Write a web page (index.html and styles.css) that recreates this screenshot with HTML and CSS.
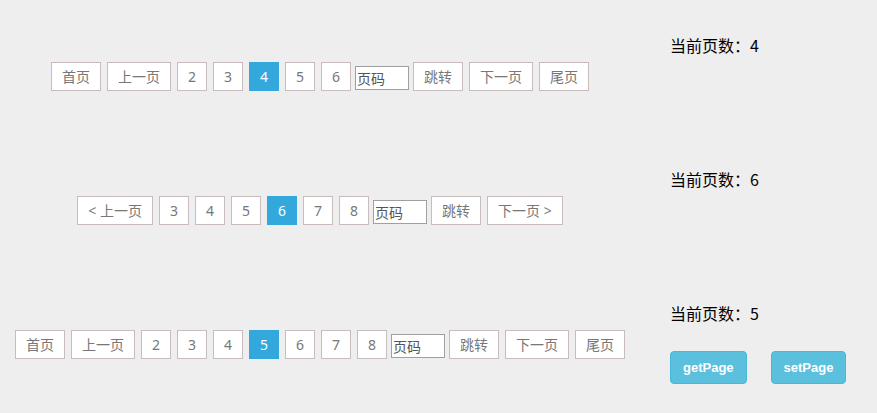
FILE: index.html
```html
<!DOCTYPE html>
<html lang="zh">
<head>
<meta charset="utf-8">
<title>分页</title>
<link rel="stylesheet" href="styles.css">
</head>
<body>
<div class="page">
  <section class="row">
    <div class="left">
      <div class="pager">
        <a class="pg">首页</a>
        <a class="pg">上一页</a>
        <a class="pg">2</a>
        <a class="pg">3</a>
        <a class="pg active">4</a>
        <a class="pg">5</a>
        <a class="pg">6</a>
        <input class="jump" type="text" value="页码">
        <a class="pg">跳转</a>
        <a class="pg">下一页</a>
        <a class="pg">尾页</a>
      </div>
    </div>
    <div class="right">
      <p class="info">当前页数：4</p>
    </div>
  </section>

  <section class="row">
    <div class="left">
      <div class="pager">
        <a class="pg">&lt; 上一页</a>
        <a class="pg">3</a>
        <a class="pg">4</a>
        <a class="pg">5</a>
        <a class="pg active">6</a>
        <a class="pg">7</a>
        <a class="pg">8</a>
        <input class="jump" type="text" value="页码">
        <a class="pg">跳转</a>
        <a class="pg">下一页 &gt;</a>
      </div>
    </div>
    <div class="right">
      <p class="info">当前页数：6</p>
    </div>
  </section>

  <section class="row last">
    <div class="left">
      <div class="pager">
        <a class="pg">首页</a>
        <a class="pg">上一页</a>
        <a class="pg">2</a>
        <a class="pg">3</a>
        <a class="pg">4</a>
        <a class="pg active">5</a>
        <a class="pg">6</a>
        <a class="pg">7</a>
        <a class="pg">8</a>
        <input class="jump" type="text" value="页码">
        <a class="pg">跳转</a>
        <a class="pg">下一页</a>
        <a class="pg">尾页</a>
      </div>
    </div>
    <div class="right">
      <p class="info">当前页数：5</p>
      <div class="actions">
        <button class="btn">getPage</button>
        <button class="btn">setPage</button>
      </div>
    </div>
  </section>
</div>
</body>
</html>
```

FILE: styles.css
```css
html, body {
  margin: 0;
  padding: 0;
  background: #eeeeee;
}

body {
  font-family: "Noto Sans", "Noto Sans CJK SC", sans-serif;
  font-size: 14px;
  overflow: hidden;
}

.page {
  padding-top: 34px;
}

.row {
  display: flex;
  height: 134px;
}

.row.last {
  height: auto;
}

.left {
  width: 640px;
  padding-top: 28px;
  display: flex;
  justify-content: center;
  align-items: flex-start;
}

.pager {
  display: flex;
  align-items: flex-start;
}

.pg {
  display: block;
  box-sizing: border-box;
  height: 29px;
  line-height: 27px;
  padding: 0 10px;
  margin: 0 3px;
  border: 1px solid #c8bcbf;
  background: #ffffff;
  color: #777777;
  font-size: 14px;
  white-space: nowrap;
  cursor: pointer;
}

.pg.active {
  background: #32a8dc;
  border-color: #32a8dc;
  color: #ffffff;
}

.jump {
  box-sizing: border-box;
  width: 54px;
  height: 24px;
  margin: 4px 1px 0;
  padding: 0 1px;
  border: 1px solid #a0a0a0;
  background: #ffffff;
  color: #555555;
  font-family: "Noto Sans CJK SC", sans-serif;
  font-size: 14px;
  outline: none;
}

.right {
  margin-left: 30px;
}

.info {
  margin: 0;
  font-family: "Noto Sans CJK SC", sans-serif;
  font-size: 16px;
  line-height: 22px;
  color: #000000;
}

.actions {
  display: flex;
  gap: 24px;
  margin-top: 27px;
}

.btn {
  box-sizing: border-box;
  height: 33px;
  padding: 0 12px;
  border: 1px solid #46b8da;
  border-radius: 4px;
  background: #5bc0de;
  color: #ffffff;
  font-family: "Liberation Sans", Arial, sans-serif;
  font-weight: bold;
  font-size: 13px;
  cursor: pointer;
}
```
